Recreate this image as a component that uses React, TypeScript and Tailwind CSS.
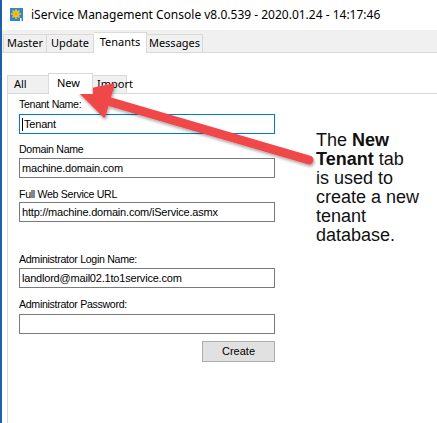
import React from 'react'

const ui = { fontFamily: '"Noto Sans", "Open Sans", sans-serif' }
const ms = { fontFamily: '"Liberation Sans", Arial, sans-serif' }

function AppIcon() {
  return (
    <svg width="13" height="13" viewBox="0 0 13 13">
      <rect x="0" y="0" width="13" height="13" fill="#2d86d6" />
      <g fill="#f2c21b">
        <circle cx="6" cy="6" r="3.4" />
        {[0, 45, 90, 135, 180, 225, 270, 315].map(a => (
          <rect key={a} x="5.2" y="1" width="1.6" height="2.2" transform={`rotate(${a} 6 6)`} />
        ))}
      </g>
      <circle cx="6" cy="6" r="1.3" fill="#e3a514" />
      <rect x="10" y="10" width="1.5" height="3" fill="#ffffff" />
    </svg>
  )
}

function Field({ label, value, mt, gap, focused, caret }: { label: string; value?: string; mt: string; gap: string; focused?: boolean; caret?: boolean }) {
  return (
    <div className={mt}>
      <div className="h-[13px] leading-[13px] text-[10.6px] tracking-[-0.3px] text-black" style={ms}>{label}</div>
      <div
        className={`${gap} h-[20px] w-[256px] border bg-white flex items-center pl-[2px] text-[11px] tracking-[-0.2px] text-black ${focused ? 'border-[#0078d7]' : 'border-[#7a7a7a]'}`}
        style={ms}
      >
        {caret && <span className="w-px h-[13px] bg-black mr-px" />}
        {value}
      </div>
    </div>
  )
}

export default function App() {
  return (
    <div className="relative w-[437px] h-[423px] overflow-hidden bg-white border-l-2 border-[#1f5fa9]">
      {/* title bar */}
      <div className="h-[30px] flex items-center pl-[8px] pb-[1px]">
        <AppIcon />
        <span className="ml-[8px] text-[12px] text-black" style={ui}>
          iService Management Console v8.0.539 - 2020.01.24 - 14:17:46
        </span>
      </div>

      {/* main tabs */}
      <div className="h-[23px] bg-[#f0f0f0] border-b border-[#d9d9d9] flex items-end pl-[1px] text-[11px] text-black" style={ui}>
        <div className="w-[44px] h-[18px] border-l border-t border-r border-[#d9d9d9] flex items-center justify-center">Master</div>
        <div className="w-[47px] h-[18px] border-t border-r border-[#d9d9d9] flex items-center justify-center">Update</div>
        <div className="w-[53px] h-[21px] -mb-px bg-white border-t border-r border-[#d9d9d9] flex items-start pt-[1px] justify-center">Tenants</div>
        <div className="w-[56px] h-[18px] border-t border-r border-[#d9d9d9] flex items-center justify-center">Messages</div>
      </div>

      {/* tenants page */}
      <div className="pt-[20px] pl-[5px]">
        <div className="h-[20px] flex items-end text-[11px] text-black" style={ui}>
          <div className="w-[41px] h-[18px] bg-[#f0f0f0] border-l border-t border-[#d9d9d9] flex items-center pl-[6px]">All</div>
          <div className="w-[45px] h-[21px] -mb-px bg-white border-l border-t border-r border-[#d9d9d9] flex items-start pt-[1px] pl-[8px] relative z-10">New</div>
          <div className="w-[34px] h-[18px] bg-[#f0f0f0] border-t border-r border-[#d9d9d9] flex items-center pl-[4px]">Import</div>
        </div>
        <div className="h-[340px] border-l border-t border-[#d9d9d9] pl-[11px] pt-[4px]">
          <Field label="Tenant Name:" value="Tenant" mt="mt-0" gap="mt-[3px]" focused caret />
          <Field label="Domain Name" value="machine.domain.com" mt="mt-[9px]" gap="mt-[2px]" />
          <Field label="Full Web Service URL" value="http://machine.domain.com/iService.asmx" mt="mt-[10px]" gap="mt-[1px]" />
          <Field label="Administrator Login Name:" value="landlord@mail02.1to1service.com" mt="mt-[31px]" gap="mt-[2px]" />
          <Field label="Administrator Password:" mt="mt-[10px]" gap="mt-[3px]" />
          <div className="w-[256px] flex justify-end mt-[7px]">
            <button className="w-[73px] h-[21px] bg-[#e1e1e1] border border-[#adadad] text-[11px] text-black" style={ms}>
              Create
            </button>
          </div>
        </div>
      </div>

      {/* annotation */}
      <div className="absolute left-[314px] top-[131px] text-[18px] leading-[19px] text-[#111]" style={ms}>
        The <b>New</b>
        <br />
        <b>Tenant</b> tab
        <br />
        is used to
        <br />
        create a new
        <br />
        tenant
        <br />
        database.
      </div>

      <svg className="absolute left-0 top-0 pointer-events-none" width="437" height="423" viewBox="2 0 437 423">
        <defs>
          <filter id="sh" x="-10%" y="-10%" width="130%" height="140%">
            <feDropShadow dx="1" dy="2" stdDeviation="1.5" floodColor="#000" floodOpacity="0.35" />
          </filter>
        </defs>
        <g filter="url(#sh)" fill="#f0474a" stroke="#f0474a">
          <line x1="309" y1="160" x2="104" y2="100" strokeWidth="9" strokeLinecap="round" />
          <polygon points="80,92 113,85 104,116" strokeWidth="3" strokeLinejoin="round" />
        </g>
      </svg>
    </div>
  )
}
